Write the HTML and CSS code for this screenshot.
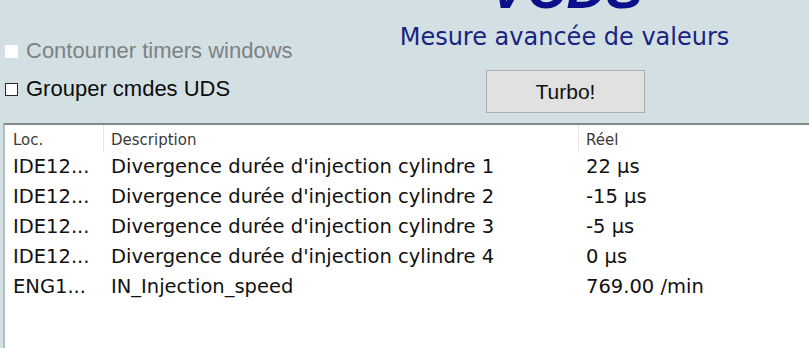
FILE: index.html
```html
<!DOCTYPE html>
<html lang="fr">
<head>
<meta charset="utf-8">
<title>VCDS - Mesure avancée de valeurs</title>
<link rel="stylesheet" href="styles.css">
</head>
<body>
<div class="app">
  <div class="top">
    <div class="opts">
      <label class="opt disabled"><span class="box"></span><span>Contourner timers windows</span></label>
      <label class="opt"><span class="box"></span><span>Grouper cmdes UDS</span></label>
    </div>
    <div class="brand">
      <div class="logo">VCDS</div>
      <div class="subtitle">Mesure avancée de valeurs</div>
      <button class="turbo" type="button">Turbo!</button>
    </div>
  </div>
  <div class="panel">
    <div class="grid">
      <div class="hd">Loc.</div>
      <div class="hd sep">Description</div>
      <div class="hd sep">Réel</div>

      <div class="cell">IDE12...</div>
      <div class="cell">Divergence durée d'injection cylindre 1</div>
      <div class="cell">22 µs</div>

      <div class="cell">IDE12...</div>
      <div class="cell">Divergence durée d'injection cylindre 2</div>
      <div class="cell">-15 µs</div>

      <div class="cell">IDE12...</div>
      <div class="cell">Divergence durée d'injection cylindre 3</div>
      <div class="cell">-5 µs</div>

      <div class="cell">IDE12...</div>
      <div class="cell">Divergence durée d'injection cylindre 4</div>
      <div class="cell">0 µs</div>

      <div class="cell">ENG1...</div>
      <div class="cell">IN_Injection_speed</div>
      <div class="cell">769.00 /min</div>
    </div>
  </div>
</div>
</body>
</html>
```
FILE: styles.css
```css
html, body {
  margin: 0;
  padding: 0;
  background: #d3e0e3;
  overflow: hidden;
}
.app {
  width: 809px;
  height: 348px;
  display: flex;
  flex-direction: column;
  font-family: "Liberation Sans", Arial, sans-serif;
}
.top {
  height: 123px;
  display: flex;
  flex-shrink: 0;
}
.opts {
  width: 400px;
  flex-shrink: 0;
  padding-top: 38px;
  display: flex;
  flex-direction: column;
  gap: 12px;
  box-sizing: border-box;
}
.opt {
  display: flex;
  align-items: center;
  gap: 8px;
  padding-left: 5px;
  font-size: 22px;
  line-height: 26px;
  height: 26px;
  color: #0c0c0c;
  white-space: nowrap;
}
.opt .box {
  width: 11px;
  height: 11px;
  background: #fff;
  border: 1px solid #2a2a2a;
  flex-shrink: 0;
  margin-top: 1px;
}
.opt.disabled {
  color: #7c8283;
}
.opt.disabled .box {
  border-color: #fff;
}
.brand {
  width: 329px;
  flex-shrink: 0;
  display: flex;
  flex-direction: column;
  align-items: center;
}
.logo {
  font-size: 55px;
  line-height: 55px;
  height: 55px;
  font-weight: bold;
  font-style: italic;
  color: #0b0f8c;
  margin-top: -38px;
  padding-left: 4px;
  white-space: nowrap;
}
.subtitle {
  font-family: "DejaVu Sans", sans-serif;
  font-size: 24px;
  line-height: 28px;
  height: 28px;
  color: #1a2480;
  margin-top: 6px;
  white-space: nowrap;
}
.turbo {
  margin-top: 19px;
  margin-left: 2px;
  width: 159px;
  height: 43px;
  flex-shrink: 0;
  background: #e1e1e1;
  border: 1px solid #adadad;
  border-radius: 0;
  font-family: "Liberation Sans", Arial, sans-serif;
  font-size: 21px;
  color: #111;
  padding: 0;
}
.panel {
  flex: 1;
  margin-left: 3px;
  background: #fff;
  border-top: 2px solid #84898b;
  border-left: 2px solid #b4bdc0;
}
.grid {
  display: grid;
  grid-template-columns: 98px 475px 1fr;
  font-family: "DejaVu Sans", sans-serif;
}
.hd {
  font-size: 15px;
  line-height: 24px;
  height: 27px;
  padding-top: 3px;
  box-sizing: border-box;
  padding-left: 8px;
  color: #3a3a3a;
}
.hd.sep {
  border-left: 1px solid #e6e6e6;
  padding-left: 7px;
}
.cell {
  font-size: 19.5px;
  line-height: 30px;
  height: 30px;
  padding-left: 8px;
  color: #111;
  white-space: nowrap;
}
```
